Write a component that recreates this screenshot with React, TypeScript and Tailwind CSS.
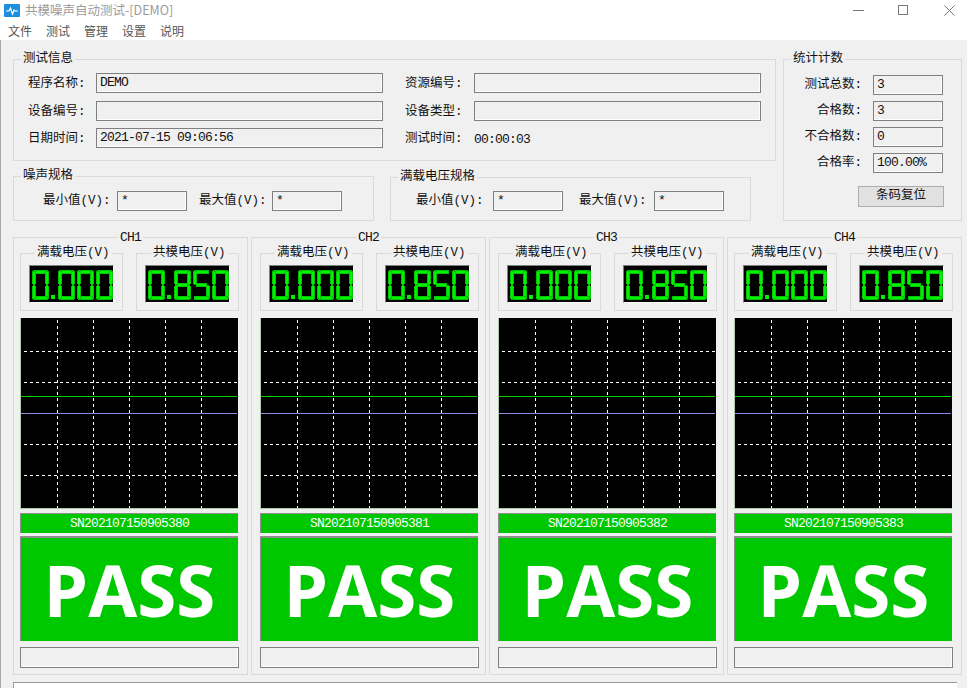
import React from "react";

const CHANNELS = [
  { name: "CH1", sn: "SN202107150905380", pad: "pl-[6px]" },
  { name: "CH2", sn: "SN202107150905381", pad: "pl-[8px]" },
  { name: "CH3", sn: "SN202107150905382", pad: "pl-[8px]" },
  { name: "CH4", sn: "SN202107150905383", pad: "pl-[6px]" },
];

const SEGS: Record<string, string> = { "0": "abcdef", "5": "acdfg", "8": "abcdefg" };

const SEG_RECTS: Record<string, [number, number, number, number]> = {
  a: [1, 0, 15, 4],
  b: [13, 1, 4, 14],
  c: [13, 15, 4, 14],
  d: [1, 26, 15, 4],
  e: [0, 15, 4, 14],
  f: [0, 1, 4, 14],
  g: [3, 13, 11, 4],
};

const DIGIT_X = [3, 29, 48, 67];

// seven segment display, one svg per meter
function Lcd({ value }: { value: string }) {
  const digits = value.replace(".", "").split("");
  return (
    <div className="w-[85px] h-[38px] bg-black border-t border-l border-t-[#808080] border-l-[#808080] border-r border-b border-r-white border-b-white">
      <svg width="83" height="36" aria-label={value} role="img" shapeRendering="crispEdges">
        <rect x="21" y="29" width="4" height="4" fill="#00f000" />
        {digits.map((d, i) => (
          <g key={i} transform={`translate(${DIGIT_X[i] - 1},4)`}>
            {SEGS[d].split("").map((s) => {
              const [x, y, w, h] = SEG_RECTS[s];
              return (
                <rect key={s} x={x + 0.5} y={y + 0.5} width={w - 1} height={h - 1} fill="#00f400" stroke="#00c400" />
              );
            })}
            {/* black nicks where the upright segments meet */}
            <rect x="0" y="14" width="1" height="2" fill="#000" />
            <rect x="16" y="14" width="1" height="2" fill="#000" />
            {!SEGS[d].includes("g") && (
              <>
                <rect x="3" y="14" width="1" height="2" fill="#000" />
                <rect x="13" y="14" width="1" height="2" fill="#000" />
              </>
            )}
          </g>
        ))}
      </svg>
    </div>
  );
}

function Group({
  title,
  className,
  titleClass,
  children,
}: {
  title: string;
  className: string;
  titleClass: string;
  children?: React.ReactNode;
}) {
  return (
    <div className={`relative border border-[#dadada] ${className}`}>
      <span className={`absolute -top-[7px] bg-[#f0f0f0] px-[2px] leading-[13px] whitespace-nowrap text-[#111] ${titleClass}`}>
        {title}
      </span>
      {children}
    </div>
  );
}

function Field({ value, className }: { value?: string; className: string }) {
  return (
    <div className={`h-[20px] border border-[#808080] shadow-[inset_-1px_-1px_0_#fff] pl-[3px] text-[13px] tracking-[-0.8px] leading-[18px] text-[#111] whitespace-pre ${className}`}>
      {value}
    </div>
  );
}

function Scope() {
  const xs = [37, 73, 109, 145, 181];
  const ys = [33, 64, 126, 157];
  return (
    <svg width="218" height="191" className="block bg-black border-l border-b border-[#a9c9a9]" shapeRendering="crispEdges">
      {xs.map((x) => (
        <line key={x} x1={x - 1} x2={x - 1} y1="2" y2="190" stroke="#fff" strokeDasharray="3 3" />
      ))}
      {ys.map((y) => (
        <line key={y} x1="3" x2="217" y1={y + 0.5} y2={y + 0.5} stroke="#fff" strokeDasharray="3 3" />
      ))}
      <line x1="0" x2="216" y1="78.5" y2="78.5" stroke="#00d000" />
      <line x1="0" x2="216" y1="95.5" y2="95.5" stroke="#8a8ae0" />
    </svg>
  );
}

function Channel({ name, sn, pad }: { name: string; sn: string; pad: string }) {
  return (
    <Group title={name} className={`w-[235px] h-[438px] pt-[15px] ${pad}`} titleClass="left-[104px] text-[13px] tracking-[-0.8px]">
      <div className="w-[219px]">
        <div className="flex justify-between">
          <Group title="满载电压(V)" className="w-[103px] h-[58px] flex justify-center pt-[11px]" titleClass="left-[14px]">
            <Lcd value="0.000" />
          </Group>
          <Group title="共模电压(V)" className="w-[103px] h-[58px] flex justify-center pt-[11px]" titleClass="left-[14px]">
            <Lcd value="0.850" />
          </Group>
        </div>
        <div className="mt-[7px]">
          <Scope />
        </div>
        <div className="mt-[4px] w-[218px] h-[20px] bg-[#00c800] border-t border-l border-[#8f8f8f] text-white text-[13px] tracking-[-0.8px] leading-[20px] text-center">
          {sn}
        </div>
        <div className="mt-[3px] w-[218px] h-[105px] bg-[#00c800] border-t-2 border-l border-[#8f8f8f] flex items-center justify-center text-white font-['Open_Sans',sans-serif] font-bold text-[71px] leading-none">
          PASS
        </div>
        <div className="mt-[6px] h-[21px] border border-[#808080] shadow-[inset_-1px_-1px_0_#fff]" />
      </div>
    </Group>
  );
}

export default function App() {
  return (
    <div className="w-[967px] h-[688px] overflow-hidden bg-[#f0f0f0] font-['Liberation_Mono','Noto_Sans_CJK_SC',monospace] text-[12.5px] text-[#111]">
      {/* title bar */}
      <div className="h-[20px] bg-white flex items-center pl-[4px] pr-[12px]">
        <svg width="16" height="13" viewBox="0 0 16 13" className="mt-[1px]">
          <rect width="16" height="13" rx="1" fill="#1c8fe0" />
          <path d="M2 7h3l1.5-3 2 6 1.5-4 1 1h3" fill="none" stroke="#fff" strokeWidth="1.2" />
        </svg>
        <span className="ml-[5px] font-['Noto_Sans_CJK_SC',sans-serif] text-[12.5px] text-[#9b9b9b] whitespace-nowrap">共模噪声自动测试-[DEMO]</span>
        <div className="ml-auto flex items-center">
          <svg width="11" height="11" className="mr-[34px]" shapeRendering="crispEdges">
            <line x1="0" x2="11" y1="5.5" y2="5.5" stroke="#777" />
          </svg>
          <svg width="11" height="11" className="mr-[35px]" shapeRendering="crispEdges">
            <rect x="0.5" y="0.5" width="9" height="9" fill="none" stroke="#777" />
          </svg>
          <svg width="11" height="11">
            <path d="M0.5 0.5l10 10M10.5 0.5l-10 10" stroke="#777" fill="none" />
          </svg>
        </div>
      </div>

      {/* menu */}
      <div className="h-[20px] bg-white flex pl-[8px] gap-[14px] font-['Noto_Sans_CJK_SC',sans-serif] text-[12px] leading-[22px] text-[#555]">
        <span>文件</span>
        <span>测试</span>
        <span>管理</span>
        <span>设置</span>
        <span>说明</span>
      </div>

      <div className="border-l border-[#a8a8a8] pl-[12px] pt-[19px]">
        <div className="flex gap-[7px]">
          <div className="w-[763px]">
            <Group title="测试信息" className="h-[102px] pt-[13px] pl-[14px]" titleClass="left-[7px]">
              <div className="grid grid-cols-[68px_287px_22px_69px_287px] grid-rows-[28px_27px_20px] items-start leading-[23px]">
                <span>程序名称:</span>
                <Field value="DEMO" className="" />
                <span />
                <span>资源编号:</span>
                <Field className="" />
                <span>设备编号:</span>
                <Field className="" />
                <span />
                <span>设备类型:</span>
                <Field className="" />
                <span>日期时间:</span>
                <Field value="2021-07-15 09:06:56" className="" />
                <span />
                <span>测试时间:</span>
                <span className="text-[13px] tracking-[-0.8px]">00:00:03</span>
              </div>
            </Group>
            <div className="flex gap-[16px] mt-[15px]">
              <Group title="噪声规格" className="w-[361px] h-[45px] flex items-start pt-[14px] pl-[29px]" titleClass="left-[7px]">
                <span className="w-[74px] leading-[20px] whitespace-nowrap">最小值(V):</span>
                <Field value="*" className="w-[70px]" />
                <span className="w-[73px] ml-[12px] leading-[20px] whitespace-nowrap">最大值(V):</span>
                <Field value="*" className="w-[70px]" />
              </Group>
              <Group title="满载电压规格" className="w-[361px] h-[44px] mt-[1px] flex items-start pt-[13px] pl-[25px]" titleClass="left-[7px]">
                <span className="w-[77px] leading-[20px] whitespace-nowrap">最小值(V):</span>
                <Field value="*" className="w-[70px]" />
                <span className="w-[75px] ml-[16px] leading-[20px] whitespace-nowrap">最大值(V):</span>
                <Field value="*" className="w-[70px]" />
              </Group>
            </div>
          </div>

          <Group title="统计计数" className="w-[179px] h-[162px] pt-[15px]" titleClass="left-[7px]">
            <div className="grid grid-cols-[78px_70px] gap-x-[11px] grid-rows-[20px_20px_20px_20px] gap-y-[6px] leading-[21px]">
              <span className="text-right">测试总数:</span>
              <Field value="3" className="" />
              <span className="text-right">合格数:</span>
              <Field value="3" className="" />
              <span className="text-right">不合格数:</span>
              <Field value="0" className="" />
              <span className="text-right">合格率:</span>
              <Field value="100.00%" className="" />
            </div>
            <button className="block ml-[74px] mt-[13px] w-[86px] h-[21px] bg-[#e1e1e1] border border-[#adadad] leading-[19px] text-[#111]">
              条码复位
            </button>
          </Group>
        </div>

        {/* channels */}
        <div className="flex gap-[3px] mt-[16px]">
          {CHANNELS.map((c) => (
            <Channel key={c.name} name={c.name} sn={c.sn} pad={c.pad} />
          ))}
        </div>

        {/* status */}
        <div className="mt-[7px] w-[944px] h-[20px] bg-white border-t border-l border-[#999]" />
      </div>
    </div>
  );
}
